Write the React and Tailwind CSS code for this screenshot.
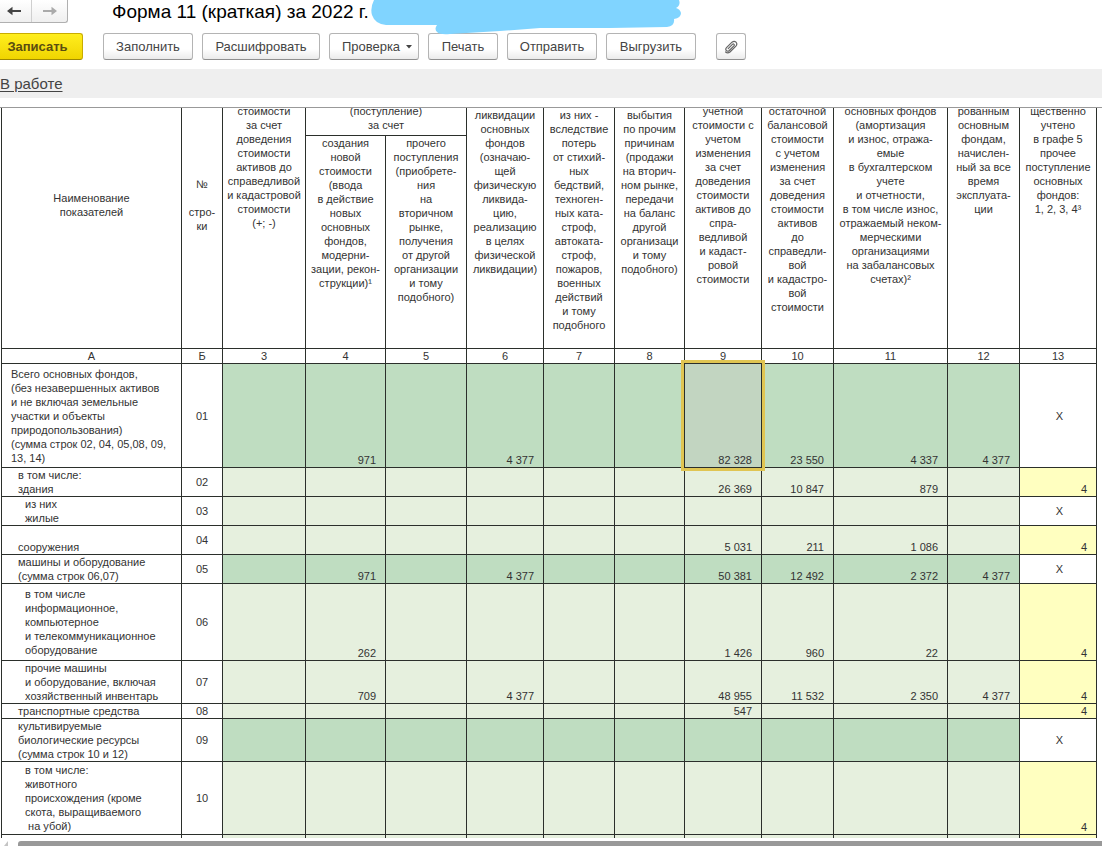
import React from "react";

const columns = ["3", "4", "5", "6", "7", "8", "9", "10", "11", "12", "13"];

const rows = [
  {
    code: "01",
    kind: "total",
    height: "h-[104px]",
    indent: "pl-[9px]",
    lines: [
      "Всего основных фондов,",
      "(без незавершенных активов",
      "и не включая земельные",
      "участки и объекты",
      "природопользования)",
      "(сумма строк 02, 04, 05,08, 09,",
      "13, 14)",
    ],
    values: ["", "971", "", "4 377", "", "", "82 328", "23 550", "4 337", "4 377"],
    last: "X",
  },
  {
    code: "02",
    kind: "item",
    height: "h-[29px]",
    indent: "pl-4",
    lines: ["в том числе:", "здания"],
    values: ["", "", "", "", "", "", "26 369", "10 847", "879", ""],
    last: "4",
  },
  {
    code: "03",
    kind: "item",
    height: "h-[29px]",
    indent: "pl-[23px]",
    lines: ["из них", "жилые"],
    values: ["", "", "", "", "", "", "", "", "", ""],
    last: "X",
  },
  {
    code: "04",
    kind: "item",
    height: "h-[29px]",
    indent: "pl-4",
    lines: ["\u00a0", "сооружения"],
    values: ["", "", "", "", "", "", "5 031", "211", "1 086", ""],
    last: "4",
  },
  {
    code: "05",
    kind: "total",
    height: "h-[29px]",
    indent: "pl-4",
    lines: ["машины и оборудование", "(сумма строк 06,07)"],
    values: ["", "971", "", "4 377", "", "", "50 381", "12 492", "2 372", "4 377"],
    last: "X",
  },
  {
    code: "06",
    kind: "item",
    height: "h-[77px]",
    indent: "pl-[23px]",
    lines: [
      "в том числе",
      "информационное,",
      "компьютерное",
      "и телекоммуникационное",
      "оборудование",
    ],
    values: ["", "262", "", "", "", "", "1 426", "960", "22", ""],
    last: "4",
  },
  {
    code: "07",
    kind: "item",
    height: "h-[43px]",
    indent: "pl-[23px]",
    lines: ["прочие машины", "и оборудование, включая", "хозяйственный инвентарь"],
    values: ["", "709", "", "4 377", "", "", "48 955", "11 532", "2 350", "4 377"],
    last: "4",
  },
  {
    code: "08",
    kind: "item",
    height: "h-[15px]",
    indent: "pl-4",
    lines: ["транспортные средства"],
    values: ["", "", "", "", "", "", "547", "", "", ""],
    last: "4",
  },
  {
    code: "09",
    kind: "total",
    height: "h-[43px]",
    indent: "pl-4",
    lines: ["культивируемые", "биологические ресурсы", "(сумма строк 10 и 12)"],
    values: ["", "", "", "", "", "", "", "", "", ""],
    last: "X",
  },
  {
    code: "10",
    kind: "item",
    height: "h-[73px]",
    indent: "pl-[23px]",
    lines: [
      "в том числе:",
      "животного",
      "происхождения (кроме",
      "скота, выращиваемого",
      "\u00a0на убой)",
    ],
    values: ["", "", "", "", "", "", "", "", "", ""],
    last: "4",
  },
  {
    code: "11",
    kind: "item",
    height: "h-[29px]",
    indent: "pl-4",
    lines: ["из них племенной", "скот"],
    values: ["", "", "", "", "", "", "", "", "", ""],
    last: "4",
  },
];

const line = "border-r border-b border-[#2b2f2b]";

function Lines({ items }) {
  return items.map((text, i) => (
    <span key={i} className="block whitespace-nowrap">
      {text}
    </span>
  ));
}

function HeadCell({ items, className = "pt-[42px]", ...rest }) {
  return (
    <th scope="col" className={`${line} px-0 pb-0 align-top font-normal ${className}`} {...rest}>
      <div className="flex flex-col items-center">
        <Lines items={items} />
      </div>
    </th>
  );
}

function ToolButton({ children, className = "", ...rest }) {
  return (
    <button
      type="button"
      className={`flex h-[27px] items-center justify-center rounded-[3px] border border-[#b4b4b4] border-b-[#8f8f8f] bg-linear-to-b from-white from-60% to-[#ebebeb] text-[13px] text-[#444] ${className}`}
      {...rest}
    >
      {children}
    </button>
  );
}

function Arrow({ color, flip = false }) {
  return (
    <svg width="14" height="10" viewBox="0 0 14 10" className={flip ? "rotate-180" : ""} aria-hidden="true">
      <path d="M0 5 5.5 0.8V4H14V6H5.5V9.2Z" fill={color} />
    </svg>
  );
}

function Header() {
  return (
    <header className="relative">
      <div className="flex h-[23px] items-start">
        <nav aria-label="История" className="flex h-[23px] w-[68px] rounded-br-[3px] border-r border-b border-[#b0b0b0] bg-linear-to-b from-white to-[#efefef]">
          <button type="button" aria-label="Назад" className="flex w-8 items-center justify-center border-r border-[#cfcfcf] pr-1">
            <Arrow color="#444" />
          </button>
          <button type="button" aria-label="Вперед" className="flex flex-1 items-center justify-center">
            <Arrow color="#aaa" flip />
          </button>
        </nav>
        <h1 className="ml-11 text-[19px] leading-[23px] whitespace-nowrap text-black">Форма 11 (краткая) за 2022 г.</h1>
      </div>
      <svg width="312" height="36" viewBox="0 0 312 36" className="absolute top-0 left-[370px]" aria-hidden="true">
        <path
          d="M4 0Q0 8 2 15Q5 24 16 25L67 25Q64 29 67 32Q70 35 80 34L130 31L170 28L240 28L297 27Q305 26 304 19Q311 18 311 13Q310 9 306 8Q311 5 309 0Z"
          fill="#80d4ff"
        />
      </svg>
      <div className="mt-[10px] flex items-center">
        <button
          type="button"
          className="h-[27px] w-[83px] rounded-r-[3px] border border-l-0 border-[#c9ac00] border-b-[#a08a00] bg-linear-to-b from-[#ffee1c] to-[#f0d500] pr-[7px] text-[13px] font-bold text-[#5a4d10]"
        >
          Записать
        </button>
        <div className="ml-5 flex gap-[9px]">
          <ToolButton className="w-[90px]">Заполнить</ToolButton>
          <ToolButton className="w-[118px]">Расшифровать</ToolButton>
          <ToolButton className="w-[90px] gap-[6px] pl-[6px]">
            Проверка
            <svg width="6" height="4" viewBox="0 0 6 4" aria-hidden="true">
              <path d="M0 0h6L3 3.5z" fill="#444" />
            </svg>
          </ToolButton>
          <ToolButton className="w-[70px]">Печать</ToolButton>
          <ToolButton className="w-[90px]">Отправить</ToolButton>
          <ToolButton className="w-[90px]">Выгрузить</ToolButton>
        </div>
        <ToolButton className="ml-5 w-[30px]" aria-label="Вложения">
          <svg width="14" height="14" viewBox="0 0 14 14" aria-hidden="true">
            <path
              d="M4.2 8.6 8.4 4.4Q9.3 3.6 10 4.3Q10.7 5 9.9 5.9L5.3 10.5Q3.7 11.9 2.4 10.6Q1.1 9.3 2.5 7.7L8 2.2Q10.2 0.4 12 2.1Q13.7 4 11.9 6.1L6 12Q3.6 13.9 1.6 12"
              fill="none"
              stroke="#666"
              strokeWidth="1.2"
              strokeLinecap="round"
            />
          </svg>
        </ToolButton>
      </div>
    </header>
  );
}

function ReportTable() {
  return (
    <table className="-mt-[46px] w-full min-w-[1096px] table-fixed border-separate border-spacing-0 text-[11px] leading-[14px] text-[#333]">
      <colgroup>
        <col className="w-[181px]" />
        <col className="w-[41px]" />
        <col className="w-[83px]" />
        <col className="w-[80px]" />
        <col className="w-[81px]" />
        <col className="w-[77px]" />
        <col className="w-[71px]" />
        <col className="w-[70px]" />
        <col className="w-[77px]" />
        <col className="w-[72px]" />
        <col className="w-[114px]" />
        <col className="w-[72px]" />
        <col className="w-[77px]" />
      </colgroup>
      <thead>
        <tr className="h-[74px]">
          <th scope="col" rowSpan={2} className={`${line} border-l p-0 align-middle font-normal`}>
            <Lines items={["Наименование", "показателей"]} />
          </th>
          <th scope="col" rowSpan={2} className={`${line} p-0 align-middle font-normal`}>
            <Lines items={["№", "\u00a0", "стро-", "ки"]} />
          </th>
          <HeadCell rowSpan={2} items={["стоимости", "за счет", "доведения", "стоимости", "активов до", "справедливой", "и кадастровой", "стоимости", "(+; -)"]} />
          <HeadCell colSpan={2} items={["(поступление)", "за счет"]} />
          <HeadCell rowSpan={2} className="pt-[46px]" items={["ликвидации", "основных", "фондов", "(означаю-", "щей", "физическую", "ликвида-", "цию,", "реализацию", "в целях", "физической", "ликвидации)"]} />
          <HeadCell rowSpan={2} className="pt-[46px]" items={["из них -", "вследствие", "потерь", "от стихий-", "ных", "бедствий,", "техноген-", "ных ката-", "строф,", "автоката-", "строф,", "пожаров,", "военных", "действий", "и тому", "подобного"]} />
          <HeadCell rowSpan={2} className="pt-[46px]" items={["выбытия", "по прочим", "причинам", "(продажи", "на вторич-", "ном рынке,", "передачи", "на баланс", "другой", "организаци", "и тому", "подобного)"]} />
          <HeadCell rowSpan={2} items={["учетной", "стоимости с", "учетом", "изменения", "за счет", "доведения", "стоимости", "активов до", "спра-", "ведливой", "и кадаст-", "ровой", "стоимости"]} />
          <HeadCell rowSpan={2} items={["остаточной", "балансовой", "стоимости", "с учетом", "изменения", "за счет", "доведения", "стоимости", "активов", "до", "справедли-", "вой", "и кадастро-", "вой", "стоимости"]} />
          <HeadCell rowSpan={2} items={["основных фондов", "(амортизация", "и износ, отража-", "емые", "в бухгалтерском", "учете", "и отчетности,", "в том числе износ,", "отражаемый неком-", "мерческими", "организациями", "на забалансовых", "счетах)²"]} />
          <HeadCell rowSpan={2} items={["рованным", "основным", "фондам,", "начислен-", "ный за все", "время", "эксплуата-", "ции"]} />
          <HeadCell rowSpan={2} items={["щественно", "учтено", "в графе 5", "прочее", "поступление", "основных", "фондов:", "1, 2, 3, 4³"]} />
        </tr>
        <tr className="h-[213px]">
          <HeadCell className="pt-0" items={["создания", "новой", "стоимости", "(ввода", "в действие", "новых", "основных", "фондов,", "модерни-", "зации, рекон-", "струкции)¹"]} />
          <HeadCell className="pt-0" items={["прочего", "поступления", "(приобрете-", "ния", "на", "вторичном", "рынке,", "получения", "от другой", "организации", "и тому", "подобного)"]} />
        </tr>
        <tr className="h-[15px]">
          <th scope="col" className={`${line} border-l p-0 font-normal`}>А</th>
          {["Б", ...columns].map((name) => (
            <th key={name} scope="col" className={`${line} p-0 font-normal`}>
              {name}
            </th>
          ))}
        </tr>
      </thead>
      <tbody>
        {rows.map((row) => (
          <tr key={row.code} className={row.height}>
            <th scope="row" className={`${line} border-l py-0 pr-0 text-left align-middle font-normal ${row.indent}`}>
              <Lines items={row.lines} />
            </th>
            <td className={`${line} p-0 text-center align-middle`}>{row.code}</td>
            {row.values.map((value, i) => {
              const selected = row.code === "01" && i === 6;
              const fill = selected ? "relative bg-[#c2d5c1]" : row.kind === "total" ? "bg-[#bfddc1]" : "bg-[#e6f0de]";
              return (
                <td key={i} className={`${line} py-0 pr-[9px] pl-0 text-right align-bottom whitespace-nowrap ${fill}`}>
                  {value}
                  {selected && <span className="absolute -inset-1 border-[3px] border-[#e0c552]" />}
                </td>
              );
            })}
            {row.last === "X" ? (
              <td className={`${line} py-0 pr-0 pl-[3px] text-center align-middle`}>X</td>
            ) : (
              <td className={`${line} bg-[#ffffc0] py-0 pr-[9px] pl-0 text-right align-bottom`}>{row.last}</td>
            )}
          </tr>
        ))}
      </tbody>
    </table>
  );
}

export default function App() {
  return (
    <div className="flex h-screen flex-col overflow-hidden bg-white font-['Liberation_Sans',Arial,sans-serif]">
      <Header />
      <div className="mt-[9px] flex h-[29px] shrink-0 items-center bg-[#efefef]">
        <a href="#status" className="text-[15px] leading-[17px] text-[#444] underline underline-offset-2">
          В работе
        </a>
      </div>
      <main className="mt-[9px] min-h-0 flex-1 overflow-hidden border-t border-[#999] pr-[5px] pl-px">
        <ReportTable />
      </main>
      <div className="mt-[3px] flex h-[5px] shrink-0 items-start" aria-hidden="true">
        <svg width="18" height="5" viewBox="0 0 18 5">
          <path d="M8 0v5H4z" fill="#c4c4c4" />
        </svg>
        <div className="h-[5px] flex-1 rounded-tl-[3px] bg-[#999]" />
      </div>
    </div>
  );
}
